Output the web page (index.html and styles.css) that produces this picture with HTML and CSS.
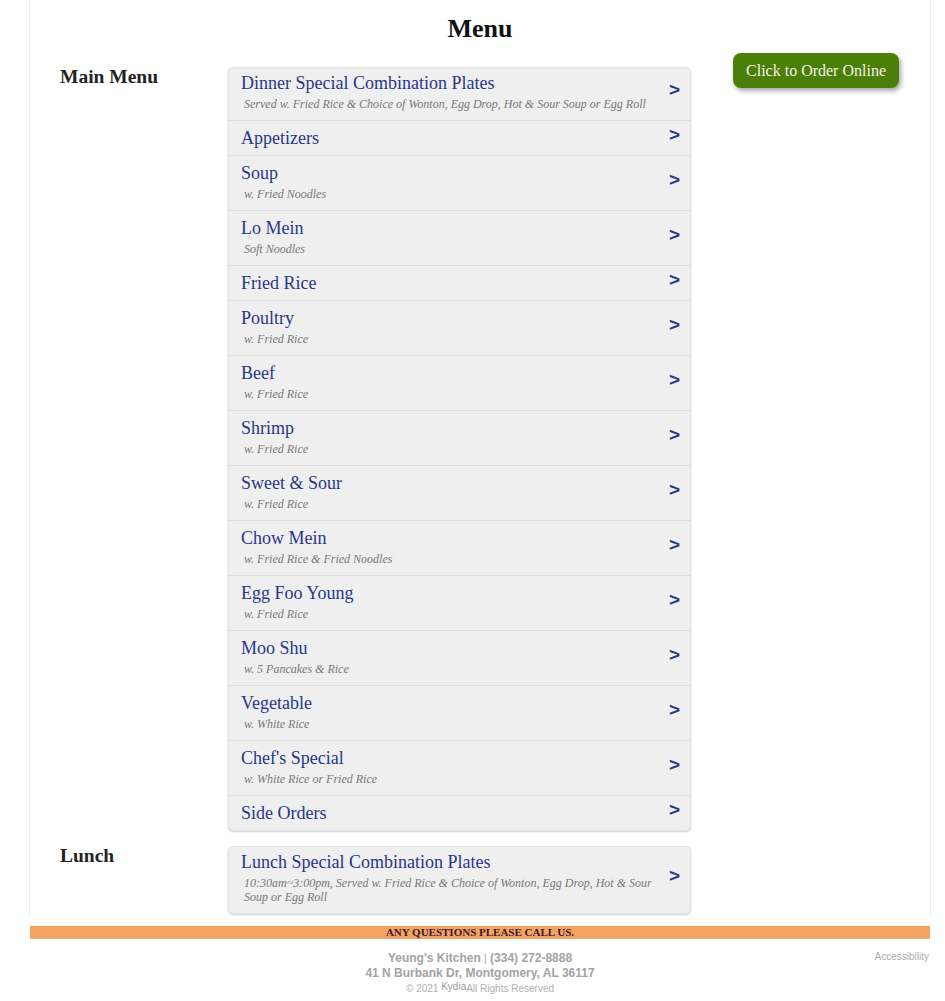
FILE: index.html
```html
<!DOCTYPE html>
<html lang="en">
<head>
<meta charset="utf-8">
<title>Menu - Yeung's Kitchen</title>
<link rel="stylesheet" href="styles.css">
</head>
<body>
<div class="page">
  <div class="container">
    <h1 class="title">Menu</h1>
    <div class="content">
      <div class="sections">
        <section class="section">
          <h2 class="label">Main Menu</h2>
          <ul class="list">
            <li class="item first"><div class="text"><div class="name">Dinner Special Combination Plates</div><div class="desc">Served w. Fried Rice &amp; Choice of Wonton, Egg Drop, Hot &amp; Sour Soup or Egg Roll</div></div><span class="arrow">&gt;</span></li>
            <li class="item"><div class="text"><div class="name">Appetizers</div></div><span class="arrow">&gt;</span></li>
            <li class="item"><div class="text"><div class="name">Soup</div><div class="desc">w. Fried Noodles</div></div><span class="arrow">&gt;</span></li>
            <li class="item"><div class="text"><div class="name">Lo Mein</div><div class="desc">Soft Noodles</div></div><span class="arrow">&gt;</span></li>
            <li class="item"><div class="text"><div class="name">Fried Rice</div></div><span class="arrow">&gt;</span></li>
            <li class="item"><div class="text"><div class="name">Poultry</div><div class="desc">w. Fried Rice</div></div><span class="arrow">&gt;</span></li>
            <li class="item"><div class="text"><div class="name">Beef</div><div class="desc">w. Fried Rice</div></div><span class="arrow">&gt;</span></li>
            <li class="item"><div class="text"><div class="name">Shrimp</div><div class="desc">w. Fried Rice</div></div><span class="arrow">&gt;</span></li>
            <li class="item"><div class="text"><div class="name">Sweet &amp; Sour</div><div class="desc">w. Fried Rice</div></div><span class="arrow">&gt;</span></li>
            <li class="item"><div class="text"><div class="name">Chow Mein</div><div class="desc">w. Fried Rice &amp; Fried Noodles</div></div><span class="arrow">&gt;</span></li>
            <li class="item"><div class="text"><div class="name">Egg Foo Young</div><div class="desc">w. Fried Rice</div></div><span class="arrow">&gt;</span></li>
            <li class="item"><div class="text"><div class="name">Moo Shu</div><div class="desc">w. 5 Pancakes &amp; Rice</div></div><span class="arrow">&gt;</span></li>
            <li class="item"><div class="text"><div class="name">Vegetable</div><div class="desc">w. White Rice</div></div><span class="arrow">&gt;</span></li>
            <li class="item"><div class="text"><div class="name">Chef's Special</div><div class="desc">w. White Rice or Fried Rice</div></div><span class="arrow">&gt;</span></li>
            <li class="item"><div class="text"><div class="name">Side Orders</div></div><span class="arrow">&gt;</span></li>
          </ul>
        </section>
        <section class="section">
          <h2 class="label">Lunch</h2>
          <ul class="list">
            <li class="item first"><div class="text"><div class="name">Lunch Special Combination Plates</div><div class="desc">10:30am~3:00pm, Served w. Fried Rice &amp; Choice of Wonton, Egg Drop, Hot &amp; Sour Soup or Egg Roll</div></div><span class="arrow">&gt;</span></li>
          </ul>
        </section>
      </div>
      <div class="aside">
        <a class="order-btn" href="#">Click to Order Online</a>
      </div>
    </div>
  </div>
  <div class="notice">ANY QUESTIONS PLEASE CALL US.</div>
  <footer class="footer">
    <div class="spacer"></div>
    <div class="info">
      <div class="line"><b>Yeung's Kitchen</b> <span class="sep">|</span> <b>(334) 272-8888</b></div>
      <div class="line"><b>41 N Burbank Dr, Montgomery, AL 36117</b></div>
      <div class="copy">© 2021 <span class="brand">Kydia</span>All Rights Reserved</div>
    </div>
    <div class="access">Accessibility</div>
  </footer>
</div>
</body>
</html>
```

FILE: styles.css
```css
html, body {
  margin: 0;
  padding: 0;
  background: #fff;
  overflow-x: hidden;
}

.page {
  width: 960px;
  font-family: "Liberation Serif", "Times New Roman", serif;
}

.container {
  width: 900px;
  margin: 0 auto;
  border-left: 1px solid #efefef;
  border-right: 1px solid #efefef;
  padding-bottom: 2px;
}

.title {
  margin: 0;
  padding-top: 14px;
  font-size: 26px;
  line-height: 30px;
  font-weight: bold;
  text-align: center;
  color: #111;
}

.content {
  display: flex;
}

.sections {
  display: flex;
  flex-direction: column;
  gap: 15px;
  padding-top: 23px;
  padding-left: 30px;
}

.section {
  display: flex;
  align-items: flex-start;
}

.label {
  width: 168px;
  margin: 0;
  font-size: 19.5px;
  line-height: 20px;
  font-weight: bold;
  color: #222;
}

.list {
  width: 463px;
  box-sizing: border-box;
  margin: 0;
  padding: 0;
  list-style: none;
  background: #efefef;
  border: 1px solid #e2e2e2;
  border-radius: 5px;
  box-shadow: 0 1px 2px rgba(0, 0, 0, 0.2);
}

.item {
  display: flex;
  align-items: center;
  padding: 7px 10px 7px 12px;
  border-bottom: 1px solid #dcdcdc;
}

.item.first {
  padding-top: 5px;
}

.item:last-child {
  border-bottom: none;
}

.text {
  flex: 1;
  min-width: 0;
}

.name {
  font-size: 18px;
  line-height: 20px;
  color: #27378a;
}

.desc {
  margin: 4px 0 2px;
  padding-left: 3px;
  font-size: 12px;
  line-height: 14px;
  font-style: italic;
  color: #777;
}

.arrow {
  margin-left: 8px;
  padding-bottom: 6px;
  font-family: "Liberation Sans", Arial, sans-serif;
  font-weight: bold;
  font-size: 19px;
  line-height: 14px;
  color: #27378a;
}

.aside {
  flex: 1;
  display: flex;
  justify-content: flex-end;
  align-items: flex-start;
  padding-top: 9px;
  padding-right: 31px;
}

.order-btn {
  display: block;
  width: 166px;
  box-sizing: border-box;
  padding: 8px 0;
  text-align: center;
  font-size: 16px;
  line-height: 19px;
  color: #f2f4e6;
  text-decoration: none;
  background: #4a7f0a;
  border-radius: 8px;
  box-shadow: 2px 3px 5px rgba(0, 0, 0, 0.35);
}

.notice {
  width: 900px;
  margin: 10px auto 0;
  background: #f4a460;
  text-align: center;
  font-size: 11px;
  line-height: 13px;
  font-weight: bold;
  color: #3b1738;
}

.footer {
  width: 900px;
  margin: 12px auto 0;
  display: grid;
  grid-template-columns: 1fr auto 1fr;
  font-family: "Liberation Sans", Arial, sans-serif;
}

.info {
  text-align: center;
  color: #a3a3a3;
}

.line {
  font-size: 12px;
  line-height: 14px;
}

.sep {
  font-size: 10px;
}

.copy {
  margin-top: 2px;
  font-size: 10px;
  line-height: 14px;
  color: #b0b0b0;
}

.brand {
  position: relative;
  top: -2px;
  color: #9a9a9a;
}

.access {
  justify-self: end;
  padding-top: 1px;
  padding-right: 1px;
  font-size: 10px;
  line-height: 10px;
  color: #ababab;
}
```
